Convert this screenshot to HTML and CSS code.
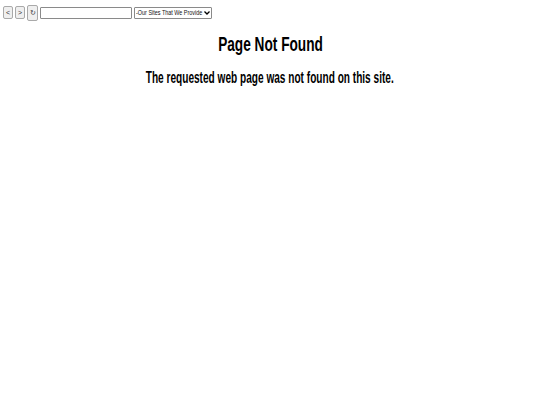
FILE: index.html
```html
<!DOCTYPE html>
<html>
<head>
<meta charset="utf-8">
<link rel="stylesheet" href="styles.css">
</head>
<body>
<div class="toolbar">
  <button class="nav">&lt;</button>
  <button class="nav">&gt;</button>
  <button class="nav reload">&#x21BB;</button>
  <input class="addr" type="text">
  <div class="sites"><span class="sites-text">-Our Sites That We Provide</span><svg class="chev" width="6" height="4" viewBox="0 0 6 4"><path d="M0.5 0.5 L3 3 L5.5 0.5" fill="none" stroke="#000" stroke-width="1.3"/></svg></div>
</div>
<div class="content">
  <h1 class="title"><span class="squeeze">Page Not Found</span></h1>
  <h2 class="msg"><span class="squeeze">The requested web page was not found on this site.</span></h2>
</div>
</body>
</html>
```
FILE: styles.css
```css
html, body { margin: 0; padding: 0; background: #fff; }
body { font-family: "Liberation Sans", Arial, sans-serif; color: #000; width: 540px; height: 405px; overflow: hidden; }
.toolbar { display: flex; align-items: center; gap: 2px; padding: 4px 0 0 3px; height: 17px; }
.nav { box-sizing: border-box; width: 10px; height: 13px; padding: 0; margin: 0; font-size: 7px; line-height: 1; border: 1px solid #a9a9a9; border-radius: 2px; background: #efefef; color: #333; font-family: "Liberation Sans", sans-serif; }
.reload { width: 11px; height: 16px; }
.addr { box-sizing: border-box; width: 92px; height: 12px; margin: 0; padding: 0; border: 1px solid #8a8a8a; border-radius: 1px; }
.sites { box-sizing: border-box; width: 78px; height: 12px; border: 1px solid #8a8a8a; border-radius: 1px; background: #fff; display: flex; align-items: center; justify-content: space-between; padding: 0 1px; overflow: hidden; }
.sites-text { display: inline-block; font-size: 8px; line-height: 10px; white-space: nowrap; transform: scaleX(0.68); transform-origin: left center; width: 68px; color: #111; }
.chev { flex: none; }
.content { text-align: center; }
.title { margin: 11px 0 0; font-size: 21px; line-height: 24px; font-weight: bold; }
.msg { margin: 12px 0 0; font-size: 17px; line-height: 20px; font-weight: bold; }
.squeeze { display: inline-block; transform: scaleX(0.65); white-space: nowrap; }
.msg .squeeze { transform: scaleX(0.594); }
```
